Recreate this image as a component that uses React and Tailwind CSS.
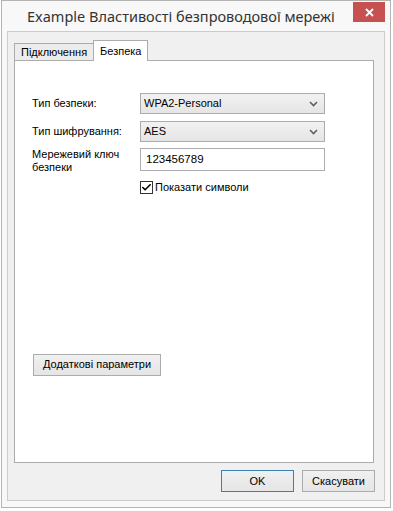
import { Check } from 'lucide-react';

const Chevron = () => (
  <svg width="9" height="6" viewBox="0 0 9 6" className="text-[#606060]">
    <path d="M1 1 L4.5 4.5 L8 1" fill="none" stroke="currentColor" strokeWidth="1.6" />
  </svg>
);

const Select = ({ value }) => (
  <div className="w-[185px] h-[21px] border border-[#acacac] bg-gradient-to-b from-[#f2f2f2] to-[#e5e5e5] flex items-center justify-between pl-[3px] pr-[6px]">
    <span>{value}</span>
    <Chevron />
  </div>
);

const App = () => {
  return (
    <div className="w-[393px] h-[511px] bg-white pl-[1px] text-[11px] text-black" style={{ fontFamily: '"Liberation Sans", Arial, sans-serif' }}>
      <div className="w-[390px] h-[508px] border border-[#b4b4b4] bg-[#f8f8f8] flex flex-col">
        {/* title bar */}
        <div className="h-[30px] flex items-start shrink-0">
          <div className="pl-[25px] pt-[5px] text-[14.5px] text-[#333]" style={{ fontFamily: '"Noto Sans", sans-serif' }}>
            Example Властивості безпроводової мережі
          </div>
          <div className="ml-auto mr-[5px] mt-[1px] w-[32px] h-[20px] bg-[#c75050] flex items-center justify-center">
            <svg width="9" height="9" viewBox="0 0 9 9">
              <path d="M1 1 L8 8 M8 1 L1 8" stroke="white" strokeWidth="1.8" />
            </svg>
          </div>
        </div>

        {/* client area */}
        <div className="flex-1 mx-[5px] mb-[6px] border border-[#cccccc] bg-[#f0f0f0] flex flex-col pl-[6px] pr-[10px] pt-[8px]">
          {/* tabs */}
          <div className="flex items-end h-[20px]">
            <div className="h-[17px] px-[6px] border border-b-0 border-[#acacac] bg-[#ececec] flex items-center">Підключення</div>
            <div className="h-[21px] -mb-[1px] px-[6px] border border-b-0 border-[#acacac] bg-white flex items-center relative z-10 -ml-px">Безпека</div>
          </div>
          {/* panel */}
          <div className="h-[403px] border border-[#acacac] bg-white flex flex-col pl-[17px] pt-[32px]">
            <div className="flex items-center h-[21px]">
              <div className="w-[108px]">Тип безпеки:</div>
              <Select value="WPA2-Personal" />
            </div>
            <div className="flex items-center h-[21px] mt-[7px]">
              <div className="w-[108px]">Тип шифрування:</div>
              <Select value="AES" />
            </div>
            <div className="flex mt-[6px]">
              <div className="w-[108px] leading-[13px]">Мережевий ключ<br />безпеки</div>
              <div className="w-[185px] h-[23px] border border-[#abadb3] bg-white flex items-center pl-[5px] text-[11.5px]">123456789</div>
            </div>
            <div className="flex items-center mt-[5px] ml-[108px]">
              <div className="w-[13px] h-[13px] border border-[#333] bg-white flex items-center justify-center">
                <Check size={11} strokeWidth={3.5} className="text-black" />
              </div>
              <span className="ml-[2px]">Показати символи</span>
            </div>
            <div className="mt-[158px] ml-px">
              <div className="inline-flex items-center h-[22px] px-[9px] border border-[#acacac] bg-gradient-to-b from-[#f0f0f0] to-[#e5e5e5]">
                Додаткові параметри
              </div>
            </div>
          </div>
          {/* buttons */}
          <div className="flex justify-end gap-[8px] mt-[7px] -mr-px">
            <div className="w-[73px] h-[22px] border border-[#3c7fb1] bg-gradient-to-b from-[#f0f0f0] to-[#e5e5e5] flex items-center justify-center">OK</div>
            <div className="w-[73px] h-[22px] border border-[#acacac] bg-gradient-to-b from-[#f0f0f0] to-[#e5e5e5] flex items-center justify-center">Скасувати</div>
          </div>
        </div>
      </div>
    </div>
  );
};

export default App;
